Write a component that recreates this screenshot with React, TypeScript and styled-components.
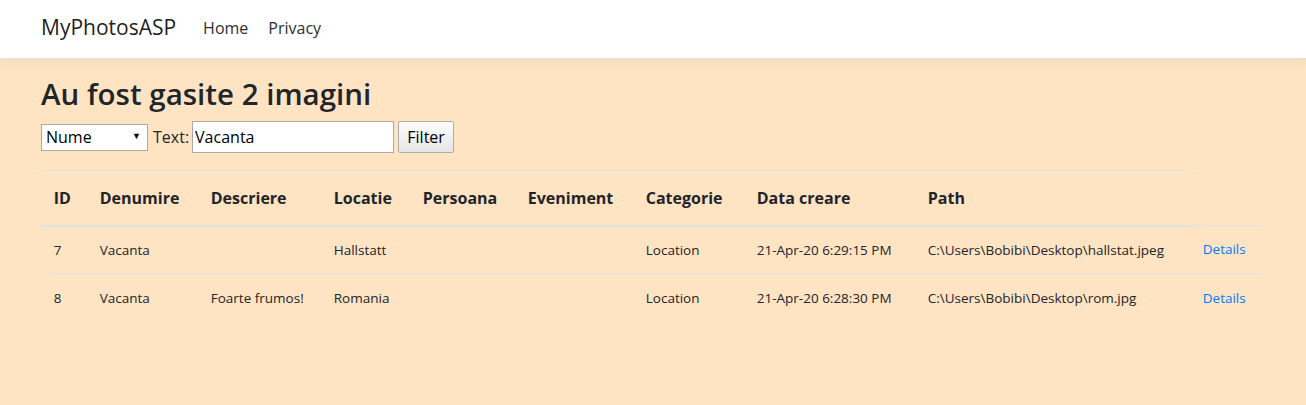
import React from "react";
import styled, { createGlobalStyle } from "styled-components";

const Global = createGlobalStyle`
  html, body { margin: 0; padding: 0; }
  body {
    background: #ffe4c4;
    font-family: "Open Sans", "Noto Sans", sans-serif;
    color: #212529;
    font-size: 16px;
    line-height: 1.5;
  }
  * { box-sizing: border-box; }
`;

const Header = styled.header`
  background: #fff;
  height: 59px;
  border-bottom: 1px solid #dee2e6;
  box-shadow: 0 4px 12px rgba(0, 0, 0, 0.05);
  display: flex;
  align-items: center;
  padding: 0 41px;
  position: relative;
`;

const Brand = styled.a`
  font-size: 21px;
  color: rgba(0, 0, 0, 0.9);
  text-decoration: none;
  margin-right: 27px;
  margin-top: -2px;
`;

const NavLink = styled.a`
  font-size: 16px;
  color: #2b2f33;
  text-decoration: none;
  margin-right: 20px;
  margin-top: -2px;
`;

const Main = styled.main`
  padding: 16px 43px 0 41px;
`;

const Title = styled.h2`
  font-size: 29.5px;
  font-weight: 600;
  line-height: 38px;
  margin: 0 0 8px;
`;

const FilterForm = styled.form`
  display: flex;
  align-items: center;
  height: 32px;
  margin-bottom: 17px;
`;

const SelectWrap = styled.div`
  position: relative;
  width: 107px;
  height: 27px;
`;

const Select = styled.select`
  appearance: none;
  width: 100%;
  height: 100%;
  border: 1px solid #a9a9a9;
  border-radius: 0;
  background: #fff;
  font-family: inherit;
  font-size: 16px;
  padding: 0 0 0 4px;
  color: #000;
`;

const Caret = styled.span`
  position: absolute;
  right: 7px;
  top: 5px;
  font-size: 9px;
  pointer-events: none;
  color: #000;
`;

const Label = styled.label`
  font-size: 16px;
  margin: 0 3px 0 5px;
`;

const TextInput = styled.input`
  width: 202px;
  height: 32px;
  border: 1px solid #a9a9a9;
  font-family: inherit;
  font-size: 16px;
  padding: 0 2px;
  color: #000;
`;

const Button = styled.button`
  margin-left: 4px;
  width: 56px;
  height: 32px;
  border: 1px solid #adadad;
  border-radius: 2px;
  background: linear-gradient(#fcfcfc, #e6e6e6);
  font-family: inherit;
  font-size: 16px;
  color: #000;
  padding: 0;
`;

const Table = styled.table`
  width: 1222px;
  border-collapse: collapse;
  table-layout: fixed;
`;

const Th = styled.th`
  text-align: left;
  font-weight: 700;
  font-size: 16px;
  padding: 13px 12.75px 12px;
  height: 55px;
  border-top: 1px solid #dee2e6;
  border-bottom: 2px solid #dee2e6;
  vertical-align: middle;
`;

const Td = styled.td`
  font-size: 13.5px;
  padding: 0 12.75px;
  height: 48px;
  border-top: 1px solid #dee2e6;
  vertical-align: middle;
  white-space: nowrap;
`;

const DetailsLink = styled.a`
  color: #007bff;
  text-decoration: none;
`;

const widths = [46, 111, 123, 89, 105, 118, 111, 171, 275, 73];
const headers = ["ID", "Denumire", "Descriere", "Locatie", "Persoana", "Eveniment", "Categorie", "Data creare", "Path"];

const rows = [
  ["7", "Vacanta", "", "Hallstatt", "", "", "Location", "21-Apr-20 6:29:15 PM", "C:\\Users\\Bobibi\\Desktop\\hallstat.jpeg"],
  ["8", "Vacanta", "Foarte frumos!", "Romania", "", "", "Location", "21-Apr-20 6:28:30 PM", "C:\\Users\\Bobibi\\Desktop\\rom.jpg"],
];

export default function App() {
  return (
    <>
      <Global />
      <Header>
        <Brand href="#">MyPhotosASP</Brand>
        <NavLink href="#">Home</NavLink>
        <NavLink href="#">Privacy</NavLink>
      </Header>
      <Main>
        <Title>Au fost gasite 2 imagini</Title>
        <FilterForm onSubmit={(e) => e.preventDefault()}>
          <SelectWrap>
            <Select defaultValue="Nume">
              <option>Nume</option>
              <option>Descriere</option>
            </Select>
            <Caret>▼</Caret>
          </SelectWrap>
          <Label>Text:</Label>
          <TextInput defaultValue="Vacanta" />
          <Button type="submit">Filter</Button>
        </FilterForm>
        <Table>
          <colgroup>
            {widths.map((w, i) => (
              <col key={i} style={{ width: w }} />
            ))}
          </colgroup>
          <thead>
            <tr>
              {headers.map((h) => (
                <Th key={h}>{h}</Th>
              ))}
            </tr>
          </thead>
          <tbody>
            {rows.map((r) => (
              <tr key={r[0]}>
                {r.map((c, i) => (
                  <Td key={i}>{c}</Td>
                ))}
                <Td>
                  <DetailsLink href="#">Details</DetailsLink>
                </Td>
              </tr>
            ))}
          </tbody>
        </Table>
      </Main>
    </>
  );
}
